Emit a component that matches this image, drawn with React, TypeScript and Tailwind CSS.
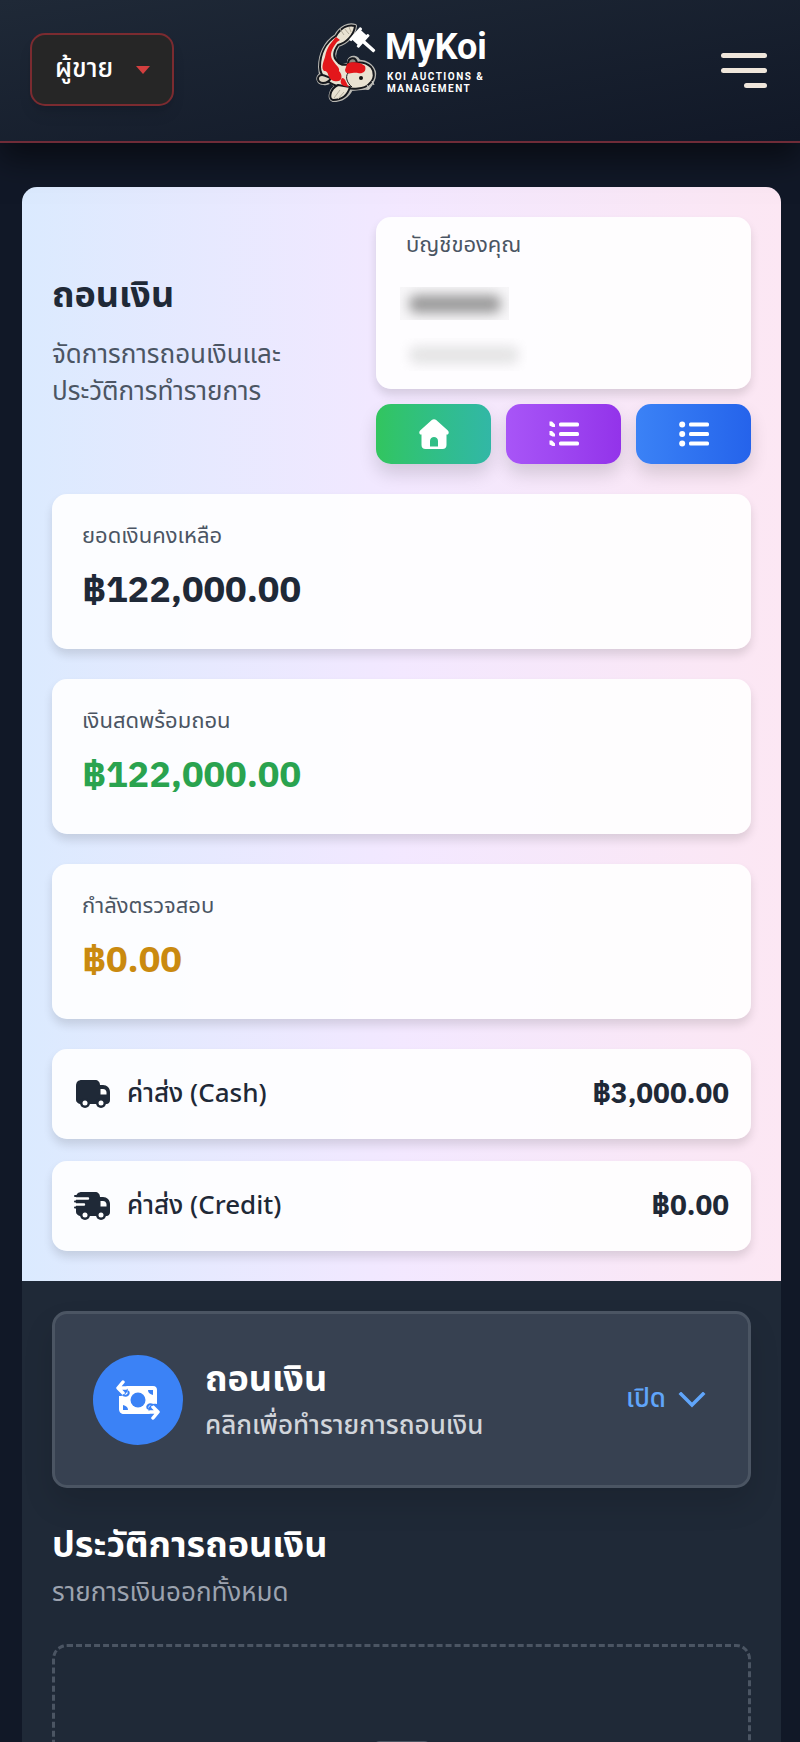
import { useState } from "react";
import type { ReactNode } from "react";

const balances = [
    { label: "ยอดเงินคงเหลือ", amount: "฿122,000.00", color: "text-[#1f2937]" },
    { label: "เงินสดพร้อมถอน", amount: "฿122,000.00", color: "text-[#2aa34f]" },
    { label: "กำลังตรวจสอบ", amount: "฿0.00", color: "text-[#ca8a0f]" },
];

function KoiLogo() {
    return (
        <svg viewBox="0 0 62 80" className="w-[62px] h-20 shrink-0" fill="none" aria-hidden="true">
            <g stroke="#b9b8b3" strokeWidth="4" strokeLinejoin="round">
                <path d="M40 3C34 1 26 4 21 13C10 20 5 32 5 44L6 52C2 53 2 60 9 60C12 61 14 59 16 58C18 61 20 62 22 63C15 68 14 75 18 77C27 77 33 72 36 66C42 66 49 64 53 65C57 60 60 55 59 49C57 43 51 38 43 39C43 34 36 33 34 38L36 41C29 42 23 46 22 42C18 36 18 29 23 22C31 20 39 12 40 3Z" />
            </g>
            <g stroke="#16181d" strokeWidth="2" strokeLinejoin="round">
                <path d="M40 3C34 1 26 4 21 13C10 20 5 32 5 44C5 54 15 62 26 64C38 67 50 66 54 61C60 56 60 49 56 44C50 38 42 39 36 41C29 42 25 43 22 38C18 34 18 29 23 22C31 20 39 12 40 3Z" fill="#e9e2d2" />
                <path d="M7 52C2 52 1 59 8 60C13 60 15 57 16 55C13 55 11 52 7 52Z" fill="#ded6c5" />
                <path d="M23 62C15 66 13 76 18 77C28 77 33 71 35 64Z" fill="#e9e2d2" />
                <path d="M33 41C33 34 41 33 42 40Z" fill="#8d897f" />
            </g>
            <path d="M21 14C17 19 12 23 10 34C8 40 6 45 9 48C15 48 11 55 19 58C28 60 28 52 24 48C25 44 20 42 17 36C15 31 16 27 22 19L25 17Z" fill="#e3171b" />
            <path d="M32 41C36 38 46 39 50 43C52 49 47 51 43 50C37 49 31 53 30 47Z" fill="#e3171b" />
            <path d="M27 55C31 55 31 61 34 64L29 63C25 61 25 58 27 55Z" fill="#e3171b" />
            <path d="M25 6L29 12M29 5L34 11M34 4L36 9M19 75L25 67M23 76L29 69" stroke="#b3ad9c" strokeWidth="1" />
            <path d="M33 50C30 54 32 60 37 64" stroke="#16181d" strokeWidth="1" />
            <circle cx="46" cy="55" r="2" fill="#111" />
            <path d="M52 62L54 66M57 58L59 62" stroke="#d5d3cc" strokeWidth="1" />
            <g fill="#fff" transform="rotate(42 46 18)">
                <rect x="36" y="8" width="3" height="17" rx="1" />
                <rect x="38" y="10" width="9" height="13" />
                <rect x="46" y="8" width="3" height="17" rx="1" />
                <rect x="48" y="15" width="15" height="3.500" rx="1" />
            </g>
        </svg>
    );
}

function HomeIcon() {
    return (
        <svg viewBox="0 0 30 30" className="size-[30px]" aria-hidden="true">
            <path
                fill="currentColor"
                fillRule="evenodd"
                d="M12.8 1C14 -.1 16 -.1 17.2 1L28.600 11.200C29.600 12.100 30 13.300 29.500 14.400C29.200 15.300 28.500 15.600 27.500 15.600V26C27.500 28.500 26 30 23.500 30H6.500C4 30 2.500 28.500 2.500 26V15.600C1.500 15.600.8 15.300.5 14.400C0 13.300.4 12.100 1.400 11.200ZM11 27.500H19V22C19 16.800 11 16.800 11 22Z"
            />
        </svg>
    );
}

function ListIcon({ cut = false }: { cut?: boolean }) {
    return (
        <svg viewBox="0 0 30 26" className="w-[30px] h-[26px]" fill="currentColor" aria-hidden="true">
            {[3.5, 13, 22.5].map((y) => (
                <g key={y}>
                    {cut ? (
                        <path d={`M.5 ${y - 3}H3L6 ${y}V${y + 2.5}H3.5L.5 ${y + 1}Z`} />
                    ) : (
                        <circle cx="3.2" cy={y} r="3" />
                    )}
                    <rect x="10" y={y - 2} width="20" height="4" rx="1.5" />
                </g>
            ))}
        </svg>
    );
}

function TruckIcon({ fast = false }: { fast?: boolean }) {
    return (
        <svg viewBox="0 0 38 28" className="w-[38px] h-7" aria-hidden="true">
            <path fill="currentColor" d="M8 0H21C24 0 26 2 26 5H29C33 5 36 8 36 12V20C36 22 35 23.500 33 24H6C4 23.500 2 22 2 20V6C2 2 4 0 8 0Z" />
            <path fill="#fff" d="M26.500 9H29C31 9 32 10 32.500 12V14.500H26.500Z" />
            {[11, 27].map((x) => (
                <g key={x}>
                    <circle cx={x} cy="23" r="5" fill="currentColor" />
                    <circle cx={x} cy="23" r="2.500" fill="#fff" />
                </g>
            ))}
            {fast && (
                <g strokeLinecap="round">
                    <path d="M0 6.500H14M0 12.500H10" stroke="#fff" strokeWidth="2.400" />
                    <path d="M1 4H5M1 9.500H11M1 15.500H5" stroke="currentColor" strokeWidth="2" />
                </g>
            )}
        </svg>
    );
}

function TransferIcon() {
    return (
        <svg viewBox="0 0 44 40" className="w-11 h-10" fill="none" aria-hidden="true">
            <path d="M10 6H37C40 6 41 8 41 10V24C36 23 34 25 32 29L34 34H8C5 34 3 32 3 29V16C8 16 10 14 12 10Z" fill="#fff" />
            <path d="M7 2L2 8L7 13M3 8H10" stroke="#fff" strokeWidth="3.500" strokeLinecap="round" strokeLinejoin="round" />
            <path d="M37 27L42 32L37 38M41 32H34" stroke="#fff" strokeWidth="3.500" strokeLinecap="round" strokeLinejoin="round" />
            <circle cx="22" cy="20" r="7.500" fill="#3b82f6" />
            <path d="M32 10H37V15C34 14 32 13 32 10ZM7 25C10 26 12 27 12 30H7Z" fill="#3b82f6" />
            <path d="M7 15C11 17 14 14 12 11M37 25C33 23 30 26 32 29" stroke="#3b82f6" strokeWidth="2" />
        </svg>
    );
}

function ShippingRow({ icon, label, amount }: { icon: ReactNode; label: string; amount: string }) {
    return (
        <div className="flex h-[90px] items-center justify-between rounded-[15px] bg-white/90 px-[22px] text-[#1f2937] shadow-[0_6px_10px_rgba(0,0,0,0.12)]">
            <div className="flex items-center gap-[15px]">
                {icon}
                <span className="text-[26px] leading-[38px] font-medium">{label}</span>
            </div>
            <span className="pb-[2px] font-['Anuphan',sans-serif] text-[28px] leading-[38px] font-bold">{amount}</span>
        </div>
    );
}

export default function App() {
    const [open, setOpen] = useState(false);

    return (
        <div className="h-screen overflow-hidden bg-[#111827] font-['Noto_Sans_Thai','Noto_Sans',sans-serif]">
            <header className="relative flex h-[143px] items-center justify-between border-b-2 border-[#6f2c38] bg-linear-to-br from-[#1f2937] to-[#111827] px-[30px] shadow-[0_16px_30px_rgba(0,0,0,0.5)]">
                <button className="mb-[2px] flex h-[73px] w-36 items-center justify-between rounded-[15px] border-2 border-[#7b2b30] bg-neutral-800 pr-[22px] pl-[23px] text-[26px] font-medium text-white shadow-lg">
                    ผู้ขาย
                    <svg viewBox="0 0 14 8" className="h-2 w-3.5" aria-hidden="true">
                        <path d="M0 0H14L7 8Z" fill="#d33f3f" />
                    </svg>
                </button>

                <a href="#" className="absolute inset-x-0 top-[23px] mx-auto flex w-[170px] gap-2 text-white">
                    <KoiLogo />
                    <span className="flex flex-col font-['Roboto',sans-serif]">
                        <span className="text-[36px] leading-[48px] font-bold">MyKoi</span>
                        <span className="pl-[2px] text-[10px] leading-3 font-bold tracking-[0.15em] whitespace-nowrap">
                            KOI AUCTIONS &amp;
                            <br />
                            MANAGEMENT
                        </span>
                    </span>
                </a>

                <button aria-label="เมนู" className="mr-[3px] flex w-[46px] flex-col items-end gap-2.5">
                    <span className="h-[5px] w-full rounded-full bg-[#efe6db]" />
                    <span className="h-[5px] w-full rounded-full bg-[#efe6db]" />
                    <span className="h-[5px] w-1/2 rounded-full bg-[#efe6db]" />
                </button>
            </header>

            <main className="mt-11 mr-[19px] ml-[22px] overflow-hidden rounded-t-[15px] bg-[#1f2937]">
                <section className="bg-linear-to-r from-blue-100 via-purple-100 to-pink-100 p-[30px]">
                    <div className="flex items-center">
                        <div className="flex-1 pr-[30px]">
                            <h1 className="text-[36px] leading-[52px] font-bold text-[#1f2937]">ถอนเงิน</h1>
                            <p className="mt-[15px] text-[26px] leading-[37px] text-[#4b5563]">
                                จัดการการถอนเงินและ
                                <br />
                                ประวัติการทำรายการ
                            </p>
                        </div>
                        <div className="w-[375px]">
                            <div className="h-[172px] rounded-[15px] bg-white/90 px-[30px] pt-[12px] shadow-[0_6px_10px_rgba(0,0,0,0.12)]">
                                <p className="text-[22px] leading-[34px] text-[#4b5563]">บัญชีของคุณ</p>
                                <div className="mt-[24px] -ml-[6px] flex h-[33px] w-[109px] items-center justify-center overflow-hidden bg-neutral-500/5">
                                    <div className="h-[18px] w-[92px] rounded-lg bg-neutral-500/70 blur-[6px]" />
                                </div>
                                <div className="mt-[18px] -ml-[6px] flex h-[33px] w-[127px] items-center justify-center overflow-hidden">
                                    <div className="h-[18px] w-[110px] rounded-lg bg-neutral-300/60 blur-[6px]" />
                                </div>
                            </div>
                            <div className="mt-[15px] grid grid-cols-3 gap-[15px] text-white">
                                <button aria-label="หน้าแรก" className="flex h-[60px] items-center justify-center rounded-[15px] bg-linear-to-r from-[#32c55e] to-[#32b7a6] shadow-[0_10px_18px_rgba(0,0,0,0.14)]">
                                    <HomeIcon />
                                </button>
                                <button aria-label="รายการ" className="flex h-[60px] items-center justify-center rounded-[15px] bg-linear-to-r from-[#a855f7] to-[#9333ea] shadow-[0_10px_18px_rgba(0,0,0,0.14)]">
                                    <ListIcon cut />
                                </button>
                                <button aria-label="ประวัติ" className="flex h-[60px] items-center justify-center rounded-[15px] bg-linear-to-r from-[#3b82f6] to-[#2563eb] shadow-[0_10px_18px_rgba(0,0,0,0.14)]">
                                    <ListIcon />
                                </button>
                            </div>
                        </div>
                    </div>

                    <div className="mt-[30px] space-y-[30px]">
                        {balances.map((b) => (
                            <div key={b.label} className="h-[155px] rounded-[15px] bg-white/90 px-[30px] pt-[26px] shadow-[0_6px_10px_rgba(0,0,0,0.12)]">
                                <p className="text-[22px] leading-[34px] text-[#4b5563]">{b.label}</p>
                                <p className={`mt-[13px] font-['Anuphan',sans-serif] text-[36px] leading-[44px] font-bold ${b.color}`}>{b.amount}</p>
                            </div>
                        ))}
                    </div>

                    <div className="mt-[30px] space-y-[22px]">
                        <ShippingRow icon={<TruckIcon />} label="ค่าส่ง (Cash)" amount="฿3,000.00" />
                        <ShippingRow icon={<TruckIcon fast />} label="ค่าส่ง (Credit)" amount="฿0.00" />
                    </div>
                </section>

                <section className="p-[30px]">
                    <button
                        aria-expanded={open}
                        onClick={() => setOpen(!open)}
                        className="flex h-[177px] w-full items-center rounded-[15px] border-3 border-[#4b5563] bg-[#374151] px-[38px] text-left shadow-[0_16px_30px_rgba(0,0,0,0.12)]"
                    >
                        <span className="flex size-[90px] items-center justify-center rounded-full bg-[#3b82f6]">
                            <TransferIcon />
                        </span>
                        <span className="ml-[22px] flex-1">
                            <span className="block text-[36px] leading-[52px] font-bold text-white">ถอนเงิน</span>
                            <span className="block text-[26px] leading-[40px] font-medium text-[#d1d5db]">คลิกเพื่อทำรายการถอนเงิน</span>
                        </span>
                        <span className="mr-[4px] flex items-center gap-3 text-[26px] font-medium text-[#60a5fa]">
                            เปิด
                            <svg viewBox="0 0 28 16" className="h-4 w-7" fill="none" aria-hidden="true">
                                <path d="M3 2L14 13L25 2" stroke="currentColor" strokeWidth="3.500" strokeLinecap="square" />
                            </svg>
                        </span>
                    </button>

                    <h2 className="mt-[32px] text-[36px] leading-[52px] font-bold text-white">ประวัติการถอนเงิน</h2>
                    <p className="text-[26px] leading-[42px] text-[#9ca3af]">รายการเงินออกทั้งหมด</p>

                    <div className="mt-[30px] flex h-[300px] justify-center rounded-[15px] border-3 border-dashed border-[#4b5563] pt-[92px]">
                        <svg viewBox="0 0 60 60" className="size-[60px] text-[#4b5563]" fill="none" aria-hidden="true">
                            <rect x="2" y="4" width="56" height="54" rx="6" stroke="currentColor" strokeWidth="4" />
                        </svg>
                    </div>
                </section>
            </main>
        </div>
    );
}
